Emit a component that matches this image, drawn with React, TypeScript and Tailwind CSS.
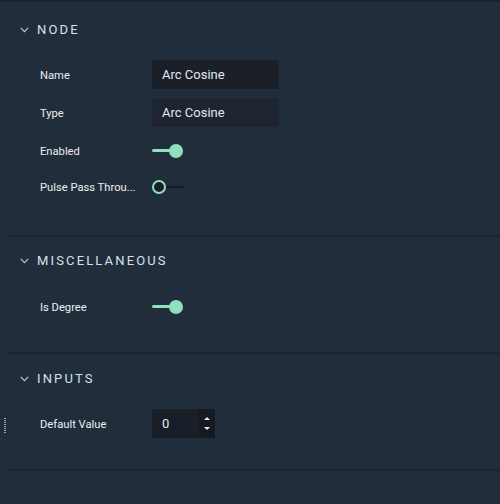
import React from "react";

const font = { fontFamily: "Roboto, 'Liberation Sans', sans-serif" };

function Chevron() {
  return (
    <svg width="9" height="6" viewBox="0 0 9 6" className="shrink-0">
      <path d="M0.8 0.8 L4.5 4.6 L8.2 0.8" fill="none" stroke="#c3ccd6" strokeWidth="1.1" />
    </svg>
  );
}

function Header({ title }: { title: string }) {
  return (
    <div className="flex items-center h-[20px] pl-[20px] pt-[2px]">
      <Chevron />
      <span className="ml-[8px] text-[13px] tracking-[0.165em] text-[#d4e2ee] font-normal">{title}</span>
    </div>
  );
}

function Label({ children }: { children: React.ReactNode }) {
  return <div className="w-[152px] shrink-0 pl-[40px] pt-[3px] text-[11.2px] font-normal text-[#eaeef2] whitespace-nowrap">{children}</div>;
}

function ToggleOn() {
  return (
    <div className="relative w-[32px] h-[16px] flex items-center">
      <div className="h-[3px] w-[22px] bg-[#8de1bd] rounded-full" />
      <div className="absolute left-[17px] top-[1px] w-[14px] h-[14px] rounded-full bg-[#8de1bd]" />
    </div>
  );
}

function ToggleOff() {
  return (
    <div className="relative w-[32px] h-[16px] flex items-center">
      <div className="absolute left-[10px] h-[2px] w-[22px] bg-[#151b23]" />
      <div className="absolute left-0 top-[1px] w-[14px] h-[14px] rounded-full border-2 border-[#8de1bd] bg-[#1a2029]" />
    </div>
  );
}

export default function App() {
  return (
    <div style={font} className="w-[500px] h-[504px] bg-[#222d3c] overflow-hidden">
      <div className="h-[2px] bg-[#1b2330]" />
      {/* NODE */}
      <div className="pt-[17px] pb-[34px]">
        <Header title="NODE" />
        <div className="mt-[21px] flex items-center h-[29px]">
          <Label>Name</Label>
          <div className="w-[127px] h-[29px] bg-[#1a1f28] flex items-center pl-[10px] pt-[1px] text-[13px] text-[#e3e8ee]">Arc Cosine</div>
        </div>
        <div className="mt-[9px] flex items-center h-[29px]">
          <Label>Type</Label>
          <div className="w-[127px] h-[29px] bg-[#1e2531] flex items-center pl-[10px] pt-[1px] text-[13px] text-[#e3e8ee]">Arc Cosine</div>
        </div>
        <div className="mt-[9px] flex items-center h-[29px]">
          <Label>Enabled</Label>
          <ToggleOn />
        </div>
        <div className="mt-[7px] flex items-center h-[29px]">
          <Label>Pulse Pass Throu...</Label>
          <ToggleOff />
        </div>
      </div>
      <div className="ml-[8px] h-[2px] bg-[#1c2431]" />
      {/* MISC */}
      <div className="pt-[13px] pb-[31px]">
        <Header title="MISCELLANEOUS" />
        <div className="mt-[22px] flex items-center h-[29px]">
          <Label>Is Degree</Label>
          <ToggleOn />
        </div>
      </div>
      <div className="ml-[8px] h-[2px] bg-[#1c2431]" />
      {/* INPUTS */}
      <div className="pt-[14px] pb-[31px]">
        <Header title="INPUTS" />
        <div className="relative mt-[21px] flex items-center h-[29px]">
          <div className="absolute left-[4px] top-[9px] w-[2px] h-[16px] bg-[repeating-linear-gradient(to_bottom,#9aa3ad_0px,#9aa3ad_1px,transparent_1px,transparent_2px)]" />
          <Label>Default Value</Label>
          <div className="w-[63px] h-[29px] bg-[#191f28] flex">
            <div className="flex-1 flex items-center pl-[10px] pt-[1px] text-[13px] text-[#e3e8ee]">0</div>
            <div className="w-[16px] bg-[#151a21] flex flex-col items-center justify-center gap-[7px]">
              <svg width="6" height="3" viewBox="0 0 6 3"><path d="M0 3 L3 0 L6 3 Z" fill="#e8ecf0" /></svg>
              <svg width="6" height="3" viewBox="0 0 6 3"><path d="M0 0 L3 3 L6 0 Z" fill="#e8ecf0" /></svg>
            </div>
          </div>
        </div>
      </div>
      <div className="ml-[8px] h-[2px] bg-[#1c2431]" />
    </div>
  );
}
